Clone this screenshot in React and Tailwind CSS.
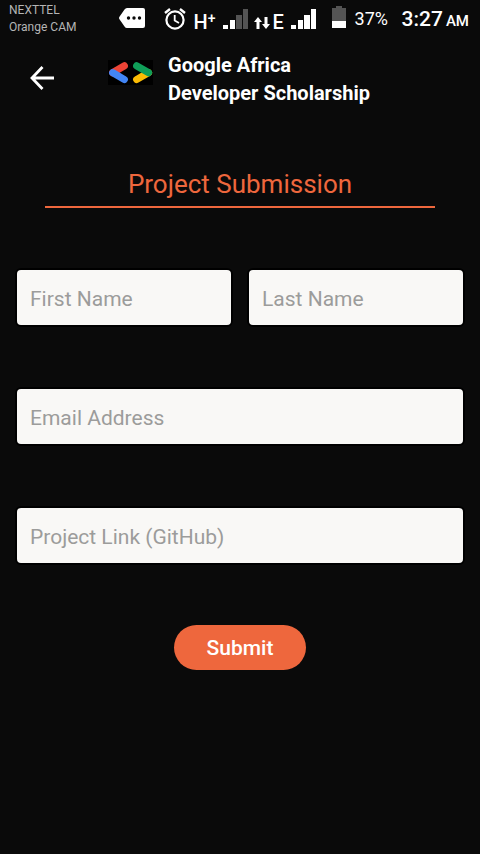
function MessageIcon() {
  return (
    <svg className="mt-2 h-5 w-[26px]" viewBox="0 0 26 20" aria-hidden="true">
      <path d="M8 0H24Q26 0 26 2V18Q26 20 24 20H8Q6.500 20 5.500 18.500L0.300 11Q-0.200 10 0.300 9L5.500 1.500Q6.500 0 8 0Z" fill="#fff" />
      <circle cx="9.500" cy="10" r="1.700" fill="#0a0a0a" />
      <circle cx="15" cy="10" r="1.700" fill="#0a0a0a" />
      <circle cx="20.500" cy="10" r="1.700" fill="#0a0a0a" />
    </svg>
  );
}

function AlarmIcon() {
  return (
    <svg className="ml-[19px] mt-2 h-[22px] w-[22px]" viewBox="0 0 22 22" fill="none" stroke="#fff" strokeWidth="2.200" aria-hidden="true">
      <circle cx="11" cy="12" r="8.600" />
      <path d="M10.700 7V12.500L15 15" strokeWidth="1.800" />
      <path d="M1 5L6 1M21 5L16 1" strokeWidth="2.400" />
    </svg>
  );
}

function Signal({ bars }) {
  const shapes = [
    [0, 16, 5, 4],
    [7, 11, 5, 9],
    [13, 6, 6, 14],
    [20, 0, 5, 20],
  ];
  return (
    <svg className="mt-[9px] h-5 w-[25px]" viewBox="0 0 25 20" aria-hidden="true">
      {shapes.map(([x, y, w, h], i) => (
        <rect key={x} x={x} y={y} width={w} height={h} fill={i < bars ? "#fff" : "#545454"} />
      ))}
    </svg>
  );
}

function DataArrows() {
  return (
    <svg className="ml-1.5 mt-[17px] h-3 w-4" viewBox="0 0 16 12" aria-hidden="true">
      <path d="M4 0L8 5H5.500V12H2.500V5H0Z" fill="#fff" />
      <path d="M12 12L16 7H13.500V0H10.500V7H8Z" fill="#fff" />
    </svg>
  );
}

function Battery() {
  return (
    <svg className="ml-4 mt-1.5 h-[22px] w-3.5" viewBox="0 0 14 22" aria-hidden="true">
      <path d="M4 0H10V2H14V15H0V2H4Z" fill="#545454" />
      <rect y="15" width="14" height="7" fill="#fff" />
    </svg>
  );
}

function StatusBar() {
  return (
    <div className="flex h-[38px] items-start pl-[9px] pr-[11px] text-white">
      <div className="flex-1 pt-0.5 text-xs leading-[17px] text-[#b5b5b5]">
        <div>NEXTTEL</div>
        <div>Orange CAM</div>
      </div>
      <MessageIcon />
      <AlarmIcon />
      <div className="ml-2 mt-3 flex w-[29px] text-xl font-medium leading-5">
        H<span className="text-sm leading-3">+</span>
      </div>
      <Signal bars={2} />
      <DataArrows />
      <div className="ml-[3px] mt-3 w-[18px] text-xl font-medium leading-5">E</div>
      <Signal bars={4} />
      <Battery />
      <div className="ml-[9px] mt-2 w-[47px] text-lg leading-[22px]">37%</div>
      <div className="mt-2 flex items-baseline gap-[3px] text-[21px] font-medium leading-[22px]">
        3:27 <span className="text-[15px]">AM</span>
      </div>
    </div>
  );
}

function Header() {
  return (
    <header className="flex items-start pb-2 pl-[30px] pt-[13px]">
      <button type="button" aria-label="Back" className="mt-[15px]">
        <svg className="h-6 w-6" viewBox="0 0 24 24" fill="none" stroke="#fff" strokeWidth="2.800" aria-hidden="true">
          <path d="M24 12H2.500M12.500 1L2 12L12.500 23" />
        </svg>
      </button>
      <svg className="ml-[54px] mt-[9px] h-[25px] w-[45px]" viewBox="0 0 45 25" fill="none" strokeWidth="7.200" strokeLinecap="round" aria-hidden="true">
        <rect width="45" height="25" fill="#000" />
        <path d="M4.700 12.700L16.300 5.900" stroke="#ea4335" />
        <path d="M4.700 12.700L16.300 19.500" stroke="#4285f4" />
        <path d="M40.500 12.700L28.700 19.500" stroke="#fbbc04" />
        <path d="M40.500 12.700L28.700 5.900" stroke="#0f9d58" />
      </svg>
      <div className="ml-[15px] text-xl font-bold leading-7 text-white">
        Google Africa
        <br />
        Developer Scholarship
      </div>
    </header>
  );
}

function Field({ label, name, type = "text" }) {
  return (
    <input
      type={type}
      name={name}
      aria-label={label}
      placeholder={label}
      className="h-[59px] w-full min-w-0 rounded-md border-2 border-black bg-[#f9f8f6] px-[13px] pt-0.5 text-[21px] text-[#333333] outline-none placeholder:text-[#9c9c9b]"
    />
  );
}

export default function App() {
  return (
    <div className="min-h-screen bg-[#0a0a0a] font-['Roboto',sans-serif]">
      <StatusBar />
      <Header />
      <main className="px-[15px] pt-[53px]">
        <h1 className="mx-[30px] border-b-2 border-[#ee673d] pb-1.5 text-center text-[26px] leading-8 text-[#ee673d]">
          Project Submission
        </h1>
        <form className="flex flex-col gap-[60px] pt-[60px]" onSubmit={(e) => e.preventDefault()}>
          <div className="grid grid-cols-2 gap-3.5">
            <Field label="First Name" name="firstName" />
            <Field label="Last Name" name="lastName" />
          </div>
          <Field label="Email Address" name="email" type="email" />
          <Field label="Project Link (GitHub)" name="projectLink" type="url" />
          <button
            type="submit"
            className="h-[45px] w-[132px] self-center rounded-full bg-[#ee673d] pt-0.5 text-[21px] font-medium text-white"
          >
            Submit
          </button>
        </form>
      </main>
    </div>
  );
}
